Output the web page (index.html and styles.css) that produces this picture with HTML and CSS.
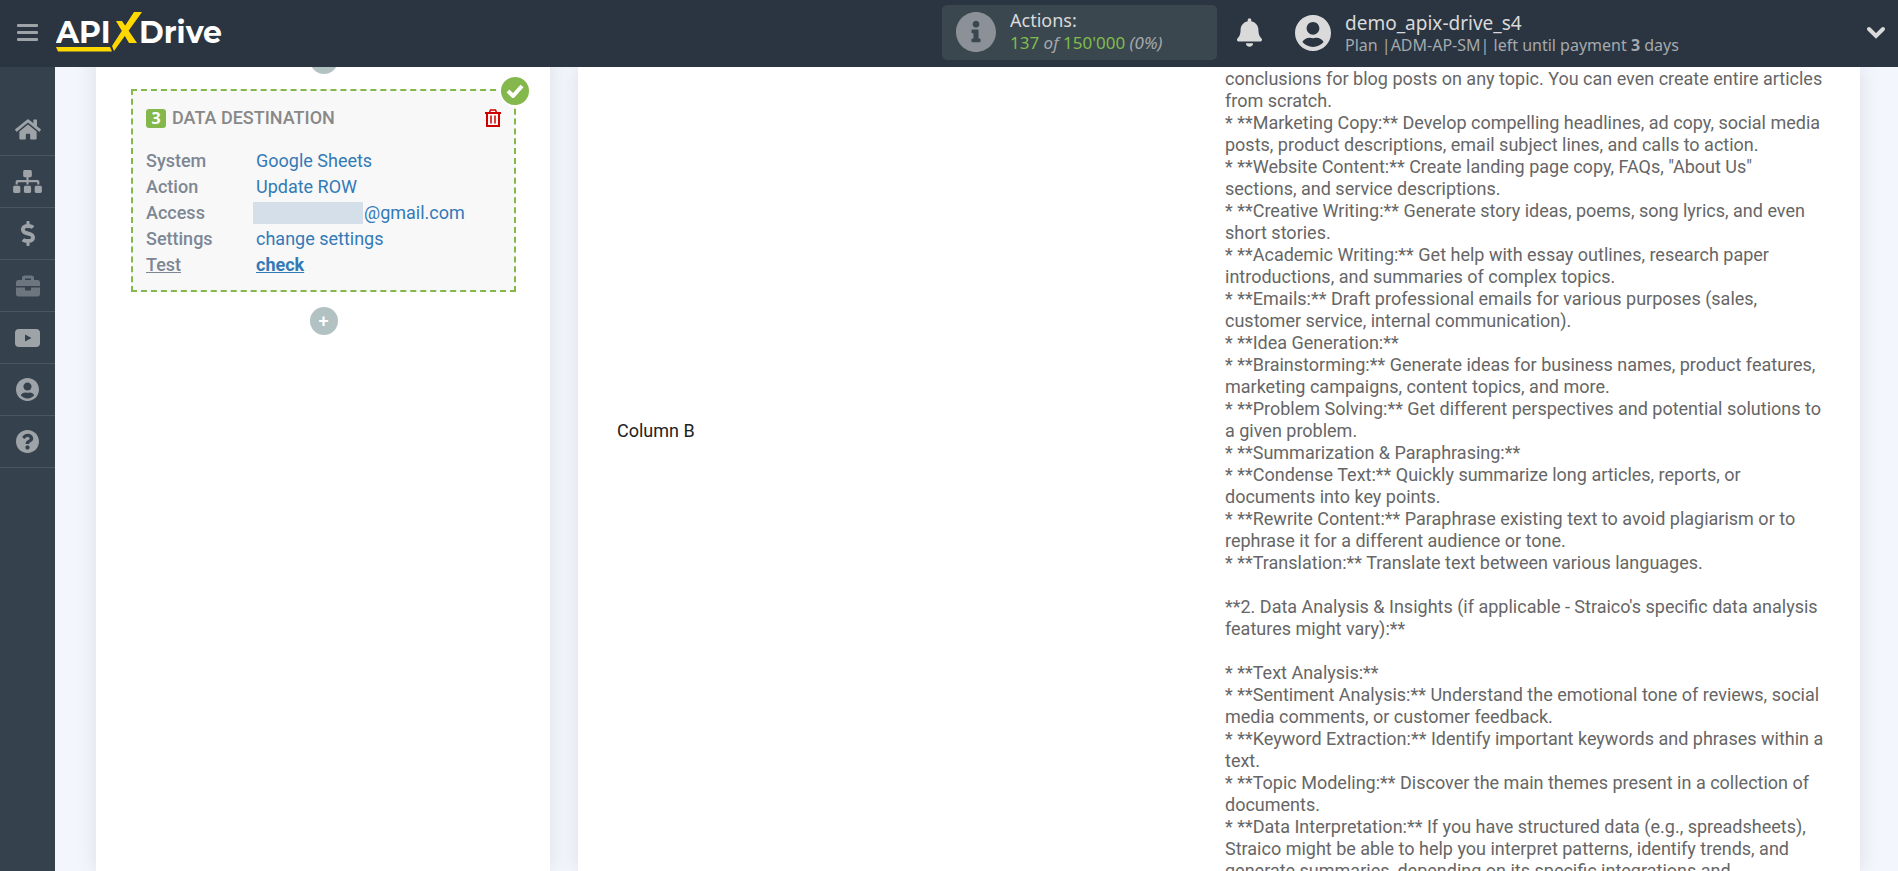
FILE: index.html
```html
<!DOCTYPE html>
<html lang="en">

<head>
    <meta charset="utf-8" />
    <title>ApiX-Drive</title>
    <meta name="viewport" content="width=device-width, initial-scale=1" />
    <link rel="stylesheet" href="styles.css">
</head>

<body>
    <header class="header">
        <button class="menu-btn" type="button" aria-label="Menu">
            <svg width="21" height="18" viewBox="0 0 21 18">
                <rect width="21" height="3" rx="1" />
                <rect y="7" width="21" height="3" rx="1" />
                <rect y="14" width="21" height="3" rx="1" />
            </svg>
        </button>
        <a class="logo" href="#" aria-label="ApiX-Drive">
            <svg width="170" height="42" viewBox="0 0 170 42">
                <text class="logo-text" x="0" y="32">API</text>
                <text class="logo-text" x="83" y="32">Drive</text>
                <path class="logo-mark" d="M60 10h6l15 22h-8zM78 1h8L58 40l-2-5zM0 36h54l2 4.500H2z" />
            </svg>
        </a>
        <div class="actions">
            <svg class="actions-icon" width="40" height="40" viewBox="8 8 496 496">
                <path d="M256 8C119.043 8 8 119.083 8 256c0 136.997 111.043 248 248 248s248-111.003 248-248C504 119.083 392.957 8 256 8zm0 110c23.196 0 42 18.804 42 42s-18.804 42-42 42-42-18.804-42-42 18.804-42 42-42zm56 254c0 6.627-5.373 12-12 12h-88c-6.627 0-12-5.373-12-12v-24c0-6.627 5.373-12 12-12h12v-64h-12c-6.627 0-12-5.373-12-12v-24c0-6.627 5.373-12 12-12h64c6.627 0 12 5.373 12 12v100h12c6.627 0 12 5.373 12 12v24z" />
            </svg>
            <div>
                <div class="actions-title">Actions:</div>
                <div class="actions-count"><span class="green">137</span> <i>of</i> <span class="green">150'000</span> <i>(0%)</i></div>
            </div>
        </div>
        <button class="bell" type="button" aria-label="Notifications">
            <svg width="25" height="29" viewBox="0 0 448 512">
                <path d="M224 512c35.32 0 63.97-28.65 63.97-64H160.03c0 35.35 28.65 64 63.97 64zm215.39-149.71c-19.32-20.76-55.47-51.99-55.47-154.29 0-77.7-54.48-139.9-127.94-155.16V32c0-17.67-14.32-32-31.98-32s-31.98 14.33-31.98 32v20.84C118.56 68.1 64.08 130.3 64.08 208c0 102.3-36.15 133.53-55.47 154.29-6 6.45-8.66 14.16-8.61 21.71.11 16.4 12.98 32 32.1 32h383.8c19.12 0 32-15.6 32.1-32 .05-7.55-2.61-15.27-8.61-21.71z" />
            </svg>
        </button>
        <button class="account" type="button">
            <svg width="36" height="36" viewBox="0 8 496 496">
                <path d="M248 8C111 8 0 119 0 256s111 248 248 248 248-111 248-248S385 8 248 8zm0 96c48.6 0 88 39.4 88 88s-39.4 88-88 88-88-39.4-88-88 39.4-88 88-88zm0 344c-58.7 0-111.3-26.6-146.5-68.2 18.8-35.4 55.6-59.8 98.5-59.8 2.4 0 4.8.4 7.1 1.1 13 4.2 26.6 6.9 40.9 6.9 14.3 0 28-2.7 40.9-6.9 2.3-.7 4.7-1.1 7.1-1.1 42.9 0 79.7 24.4 98.5 59.8C359.3 421.4 306.7 448 248 448z" />
            </svg>
            <span class="account-text">
                <span class="account-name">demo_apix-drive_s4</span>
                <span class="account-plan">Plan |ADM-AP-SM| left until payment <b>3</b> days</span>
            </span>
            <svg class="chevron" width="20" height="13" viewBox="0 0 20 13">
                <path d="M3 3l7 7 7-7" fill="none" stroke="currentColor" stroke-width="4" stroke-linecap="round" />
            </svg>
        </button>
    </header>

    <div class="page">
        <nav class="sidebar">
            <a href="#" aria-label="Home">
                <svg width="26" height="23" viewBox="0 0 576 512">
                    <path d="M280.37 148.26L96 300.11V464a16 16 0 0 0 16 16l112.06-.29a16 16 0 0 0 15.92-16V368a16 16 0 0 1 16-16h64a16 16 0 0 1 16 16v95.64a16 16 0 0 0 16 16.05L464 480a16 16 0 0 0 16-16V300L295.67 148.26a12.19 12.19 0 0 0-15.3 0zM571.6 251.47L488 182.56V44.05a12 12 0 0 0-12-12h-56a12 12 0 0 0-12 12v72.61L318.47 43a48 48 0 0 0-61 0L4.34 251.47a12 12 0 0 0-1.6 16.9l25.5 31A12 12 0 0 0 45.15 301l235.22-193.74a12.19 12.19 0 0 1 15.3 0L530.9 301a12 12 0 0 0 16.9-1.6l25.5-31a12 12 0 0 0-1.7-16.93z" />
                </svg>
            </a>
            <a href="#" aria-label="Connections">
                <svg width="29" height="23" viewBox="0 0 640 512">
                    <path d="M128 352H32c-17.67 0-32 14.33-32 32v96c0 17.67 14.33 32 32 32h96c17.67 0 32-14.33 32-32v-96c0-17.67-14.33-32-32-32zm-24-80h192v48h48v-48h192v48h48v-57.59c0-21.17-17.23-38.41-38.41-38.41H344v-64h40c17.67 0 32-14.33 32-32V32c0-17.67-14.33-32-32-32H256c-17.67 0-32 14.33-32 32v96c0 17.67 14.33 32 32 32h40v64H94.41C73.23 224 56 241.23 56 262.41V320h48v-48zm264 80h-96c-17.67 0-32 14.33-32 32v96c0 17.67 14.33 32 32 32h96c17.67 0 32-14.33 32-32v-96c0-17.67-14.33-32-32-32zm240 0h-96c-17.67 0-32 14.33-32 32v96c0 17.67 14.33 32 32 32h96c17.67 0 32-14.33 32-32v-96c0-17.67-14.33-32-32-32z" />
                </svg>
            </a>
            <a href="#" aria-label="Billing">
                <svg width="14" height="25" viewBox="0 0 288 512">
                    <path d="M209.2 233.4l-108-31.6C88.7 198.2 80 186.5 80 173.5c0-16.3 13.2-29.5 29.5-29.5h66.3c12.2 0 24.2 3.7 34.2 10.5 6.1 4.1 14.3 3.1 19.5-2l34.8-34c7.1-6.900 6.1-18.4-1.8-24.5C238 74.8 207.4 64.1 176 64V16c0-8.8-7.2-16-16-16h-32c-8.800 0-16 7.2-16 16v48h-2.500C45.8 64-5.4 118.7.5 183.6c4.2 46.1 39.4 83.6 83.8 96.6l102.5 30c12.5 3.7 21.2 15.3 21.2 28.3 0 16.3-13.2 29.5-29.5 29.5h-66.3C100 368 88 364.3 78 357.5c-6.1-4.1-14.3-3.1-19.5 2l-34.8 34c-7.1 6.9-6.1 18.4 1.8 24.5 24.5 19.2 55.1 29.9 86.5 30v48c0 8.8 7.2 16 16 16h32c8.8 0 16-7.2 16-16v-48.2c46.6-.9 90.3-28.6 105.7-72.7 21.5-61.6-14.6-124.8-72.5-141.7z" />
                </svg>
            </a>
            <a class="muted" href="#" aria-label="Services">
                <svg width="24" height="24" viewBox="0 0 512 512">
                    <path d="M320 336c0 8.84-7.16 16-16 16h-96c-8.84 0-16-7.16-16-16v-48H0v144c0 25.6 22.4 48 48 48h416c25.6 0 48-22.4 48-48V288H320v48zm144-208h-80V80c0-25.6-22.4-48-48-48H176c-25.6 0-48 22.4-48 48v48H48c-25.6 0-48 22.4-48 48v80h512v-80c0-25.6-22.4-48-48-48zm-144 0H192V96h128v32z" />
                </svg>
            </a>
            <a href="#" aria-label="Video">
                <svg width="25" height="18" viewBox="0 0 25 18">
                    <path fill-rule="evenodd" d="M4 0C8 -.3 17 -.3 21 0Q25 0 25 4V14Q25 18 21 18H4Q0 18 0 14V4Q0 0 4 0zM10 5.500v7l6.500-3.500z" />
                </svg>
            </a>
            <a href="#" aria-label="Profile">
                <svg width="23" height="23" viewBox="0 8 496 496">
                    <path d="M248 8C111 8 0 119 0 256s111 248 248 248 248-111 248-248S385 8 248 8zm0 96c48.6 0 88 39.4 88 88s-39.4 88-88 88-88-39.4-88-88 39.4-88 88-88zm0 344c-58.7 0-111.3-26.6-146.5-68.2 18.8-35.4 55.6-59.8 98.5-59.8 2.4 0 4.8.4 7.1 1.1 13 4.2 26.6 6.9 40.9 6.9 14.3 0 28-2.7 40.9-6.9 2.3-.7 4.7-1.1 7.1-1.1 42.9 0 79.7 24.4 98.5 59.8C359.3 421.4 306.7 448 248 448z" />
                </svg>
            </a>
            <a href="#" aria-label="Help">
                <svg width="23" height="23" viewBox="8 8 496 496">
                    <path d="M504 256c0 136.997-111.043 248-248 248S8 392.997 8 256C8 119.083 119.043 8 256 8s248 111.083 248 248zM262.655 90c-54.497 0-89.255 22.957-116.549 63.758-3.536 5.286-2.353 12.415 2.715 16.258l34.699 26.31c5.205 3.947 12.621 3.008 16.665-2.122 17.864-22.658 30.113-35.797 57.303-35.797 20.429 0 45.698 13.148 45.698 32.958 0 14.976-12.363 22.667-32.534 33.976C247.128 238.528 216 254.941 216 296v4c0 6.627 5.373 12 12 12h56c6.627 0 12-5.373 12-12v-1.333c0-28.462 83.186-29.647 83.186-106.667 0-58.002-60.165-102-116.531-102zM256 338c-25.365 0-46 20.635-46 46 0 25.364 20.635 46 46 46s46-20.636 46-46c0-25.365-20.635-46-46-46z" />
                </svg>
            </a>
        </nav>

        <main class="content">
            <section class="panel steps">
                <button class="add-btn" type="button" aria-label="Add step">+</button>
                <div class="card">
                    <div class="card-done">
                        <svg width="18" height="14" viewBox="0 0 18 14">
                            <path d="M2 7l5 5L16 2" fill="none" stroke="#fff" stroke-width="4" />
                        </svg>
                    </div>
                    <div class="card-head">
                        <span class="card-num">3</span>
                        <h2>DATA DESTINATION</h2>
                        <button class="trash" type="button" aria-label="Delete">
                            <svg width="16" height="18" viewBox="0 0 16 18">
                                <path d="M0 4h16M2 4v13h12V4" fill="none" stroke="currentColor" stroke-width="2" />
                                <path d="M4.500 3.500L5.500 1h5l1 2.500M6 6.500v8M10 6.500v8" fill="none" stroke="currentColor" stroke-width="1.500" />
                            </svg>
                        </button>
                    </div>
                    <table class="card-table">
                        <tr>
                            <th>System</th>
                            <td><a href="#">Google Sheets</a></td>
                        </tr>
                        <tr>
                            <th>Action</th>
                            <td><a href="#">Update ROW</a></td>
                        </tr>
                        <tr>
                            <th>Access</th>
                            <td><a class="access" href="#"><span class="mask"></span>@gmail.com</a></td>
                        </tr>
                        <tr>
                            <th>Settings</th>
                            <td><a href="#">change settings</a></td>
                        </tr>
                        <tr class="current">
                            <th>Test</th>
                            <td><a href="#">check</a></td>
                        </tr>
                    </table>
                </div>
                <button class="add-btn" type="button" aria-label="Add step">+</button>
            </section>

            <section class="panel result">
                <table class="result-table">
                    <tr>
                        <td class="col-name">Column B</td>
                        <td class="col-value">conclusions for blog posts on any topic. You can even create entire articles from scratch.
* **Marketing Copy:** Develop compelling headlines, ad copy, social media posts, product descriptions, email subject lines, and calls to action.
* **Website Content:** Create landing page copy, FAQs, "About Us" sections, and service descriptions.
* **Creative Writing:** Generate story ideas, poems, song lyrics, and even short stories.
* **Academic Writing:** Get help with essay outlines, research paper introductions, and summaries of complex topics.
* **Emails:** Draft professional emails for various purposes (sales, customer service, internal communication).
* **Idea Generation:**
* **Brainstorming:** Generate ideas for business names, product features, marketing campaigns, content topics, and more.
* **Problem Solving:** Get different perspectives and potential solutions to a given problem.
* **Summarization &amp; Paraphrasing:**
* **Condense Text:** Quickly summarize long articles, reports, or documents into key points.
* **Rewrite Content:** Paraphrase existing text to avoid plagiarism or to rephrase it for a different audience or tone.
* **Translation:** Translate text between various languages.

**2. Data Analysis &amp; Insights (if applicable - Straico's specific data analysis features might vary):**

* **Text Analysis:**
* **Sentiment Analysis:** Understand the emotional tone of reviews, social media comments, or customer feedback.
* **Keyword Extraction:** Identify important keywords and phrases within a text.
* **Topic Modeling:** Discover the main themes present in a collection of documents.
* **Data Interpretation:** If you have structured data (e.g., spreadsheets), Straico might be able to help you interpret patterns, identify trends, and generate summaries, depending on its specific integrations and</td>
                    </tr>
                </table>
            </section>
        </main>
    </div>
</body>

</html>
```
FILE: styles.css
```css
* {
    box-sizing: border-box;
}

body {
    margin: 0;
    height: 100vh;
    overflow: hidden;
    display: flex;
    flex-direction: column;
    background: #f3f7fd;
    font-family: Roboto, "Liberation Sans", sans-serif;
    font-size: 18px;
    line-height: 22px;
    color: #666;
}

button {
    padding: 0;
    border: 0;
    background: none;
    font: inherit;
    color: inherit;
    cursor: pointer;
}

svg {
    display: block;
    fill: currentColor;
}

a {
    color: #337ab7;
    text-decoration: none;
}

/* Header */
.header {
    position: relative;
    z-index: 1;
    flex: none;
    display: flex;
    align-items: center;
    height: 67px;
    padding: 0 12px 2px 17px;
    background: #2a3541;
    color: #dadada;
    font-family: "Noto Sans", "Open Sans", sans-serif;
}

.menu-btn {
    color: #9ea3a8;
}

.logo {
    margin-left: 18px;
    margin-right: auto;
    padding-bottom: 2px;
    color: #fff;
}

.logo-text {
    font-family: Montserrat, Inter, sans-serif;
    font-size: 30px;
    font-weight: 700;
}

.logo-mark {
    fill: #ffd800;
}

.actions {
    display: flex;
    align-items: center;
    gap: 14px;
    width: 275px;
    height: 55px;
    padding: 0 0 2px 14px;
    border-radius: 5px;
    background: #3b474f;
}

.actions-icon {
    color: #8b9197;
}

.actions-title {
    margin-bottom: 1px;
    font-size: 18px;
}

.actions-count {
    font-size: 17px;
    color: #a5a9ad;
}

.green {
    color: #7fbc4c;
}

.bell {
    margin-left: 20px;
}

.account {
    display: flex;
    align-items: center;
    width: 591px;
    margin-left: 33px;
    text-align: left;
}

.account-text {
    margin-left: 14px;
    padding-top: 2px;
}

.account-name {
    display: block;
    font-size: 19px;
}

.account-plan {
    display: block;
    font-size: 16px;
    color: #a5a9ad;
}

.chevron {
    margin-left: auto;
}

/* Sidebar */
.page {
    flex: 1;
    min-height: 0;
    display: flex;
}

.sidebar {
    flex: none;
    width: 55px;
    padding-top: 37px;
    background: #36414e;
}

.sidebar a {
    display: flex;
    align-items: center;
    justify-content: center;
    height: 52px;
    border-bottom: 1px solid #4b5664;
    color: #9ea3a8;
}

.sidebar .muted {
    color: #6d757f;
}

.content {
    flex: 1;
    min-width: 0;
    display: flex;
    gap: 28px;
    padding: 0 38px 0 41px;
}

.panel {
    background: #fff;
    box-shadow: 0 0 20px rgba(0, 0, 0, .1);
}

/* Steps */
.steps {
    flex: none;
    width: 454px;
    padding: 0 34px 0 35px;
    margin-top: -21px;
    display: flex;
    flex-direction: column;
    align-items: center;
    gap: 15px;
}

.add-btn {
    flex: none;
    width: 28px;
    height: 28px;
    border-radius: 50%;
    background: #b2c2c2;
    color: #fff;
    font-weight: 500;
}

.card {
    position: relative;
    align-self: stretch;
    padding: 14px 13px 12px;
    border: 2px dashed #84b84c;
    background: #f8f8f8;
}

.card-done {
    position: absolute;
    top: -16px;
    right: -17px;
    width: 32px;
    height: 32px;
    display: flex;
    align-items: center;
    justify-content: center;
    border: 2px solid #fff;
    border-radius: 50%;
    background: #84b84c;
}

.card-head {
    display: flex;
    align-items: center;
    height: 26px;
    margin-bottom: 17px;
}

.card-num {
    width: 20px;
    height: 19px;
    border-radius: 3px;
    background: #84b84c;
    color: #fff;
    font: bold 16px/19px "Open Sans", sans-serif;
    text-align: center;
}

.card-head h2 {
    margin: 0 auto 0 6px;
    font-size: 18px;
    font-weight: 500;
    color: #888;
}

.trash {
    color: #d00000;
}

.card-table {
    border-collapse: collapse;
}

.card-table th {
    width: 110px;
    height: 26px;
    padding: 0;
    font-weight: 500;
    text-align: left;
    color: #7d8794;
}

.card-table td {
    padding: 0;
}

.access {
    display: flex;
    align-items: center;
    margin-left: -3px;
}

.mask {
    width: 110px;
    height: 22px;
    margin-right: 1px;
    background: #d4dfe9;
}

.current th,
.current a {
    text-decoration: underline;
}

.current a {
    font-weight: 700;
}

/* Result */
.result {
    flex: 1;
    min-width: 0;
    padding: 1px 35px 0 31px;
}

.result-table {
    width: 100%;
    table-layout: fixed;
    border-collapse: collapse;
}

.result-table td {
    padding: 0 0 0 8px;
    vertical-align: top;
}

.result-table .col-name {
    width: 50%;
    padding-top: 352px;
    color: #222;
}

.result-table .col-value {
    white-space: pre-line;
}
```
